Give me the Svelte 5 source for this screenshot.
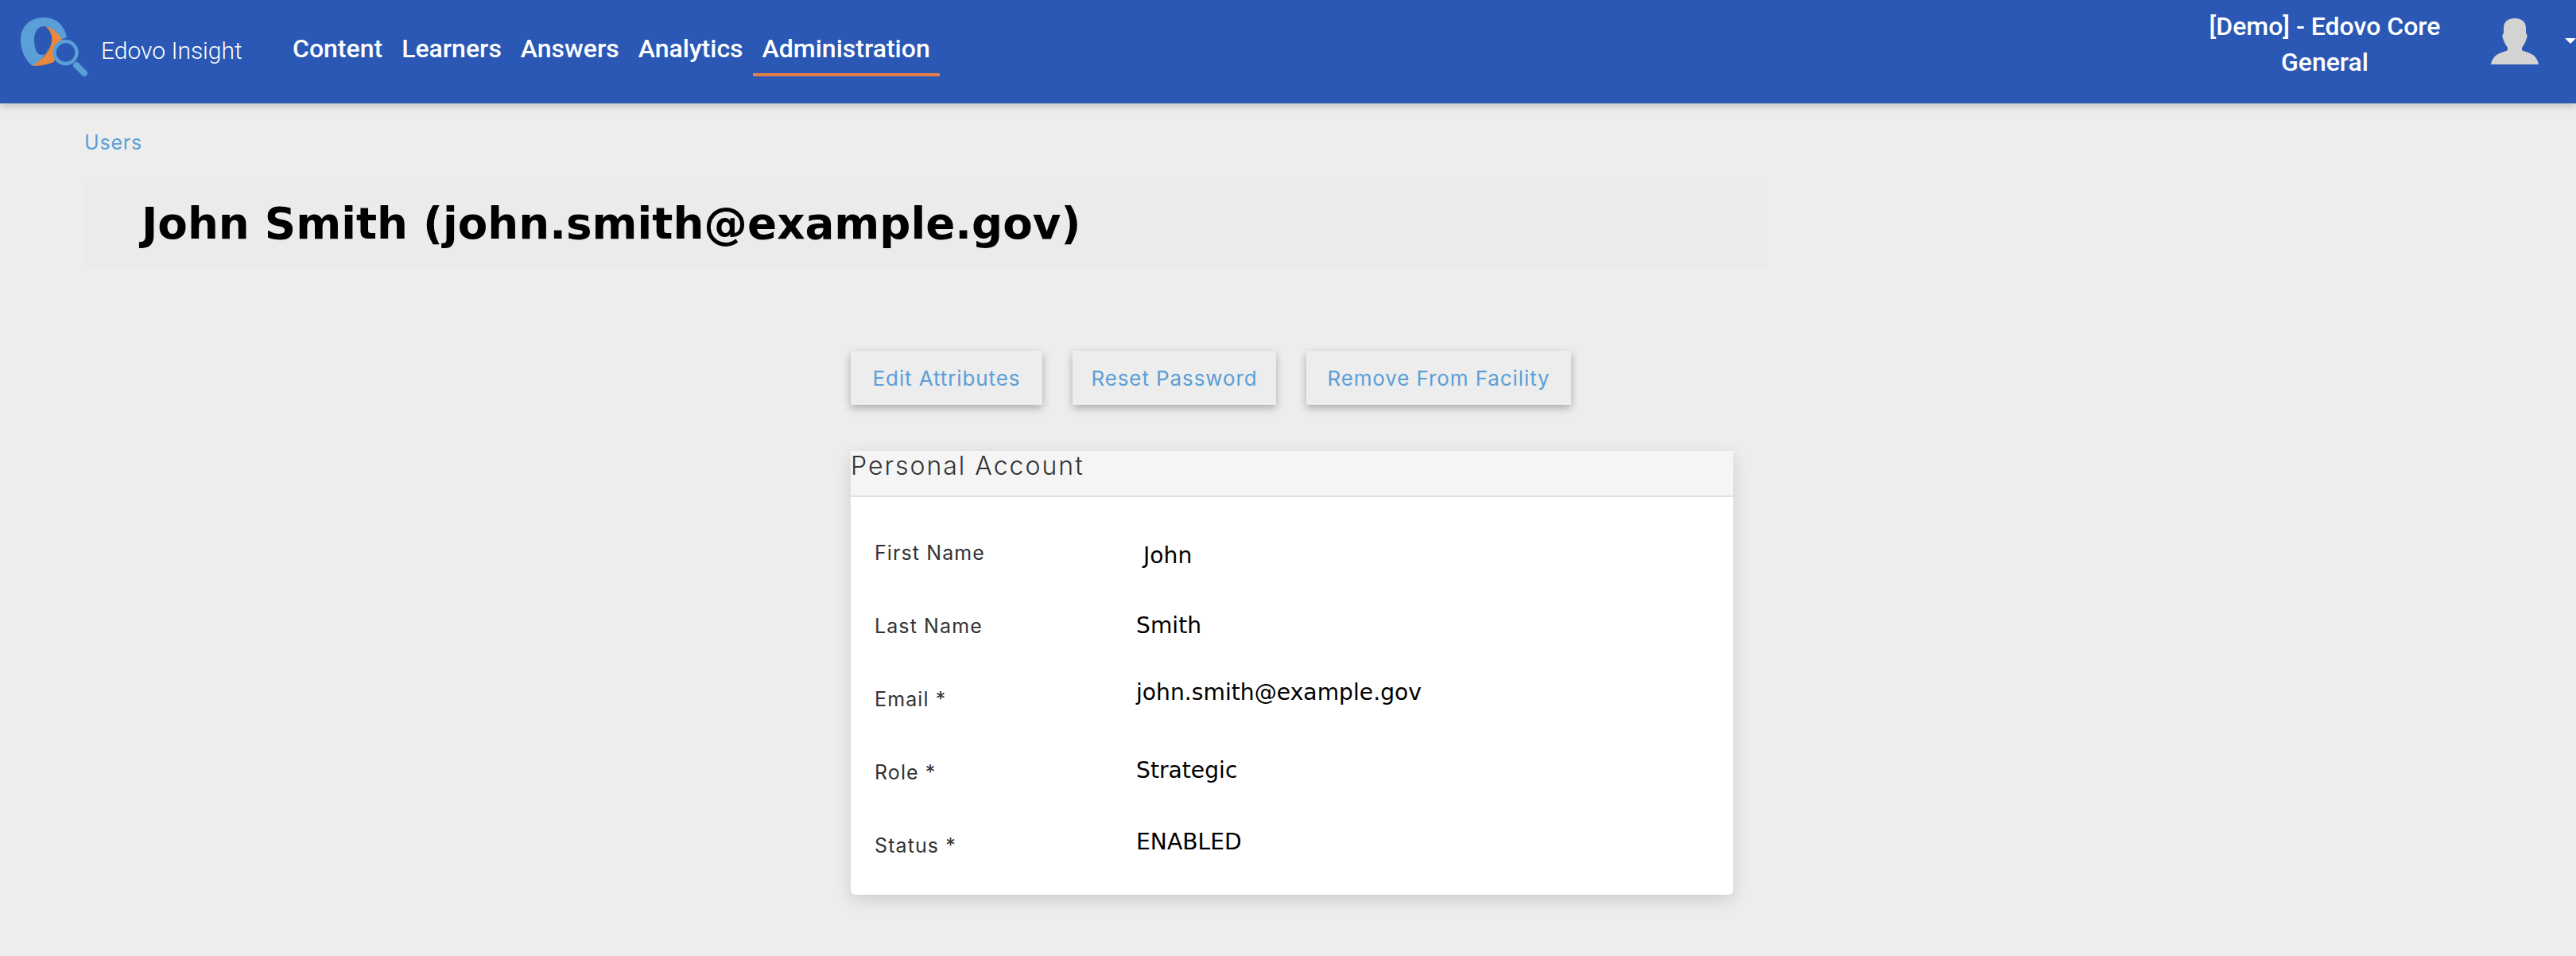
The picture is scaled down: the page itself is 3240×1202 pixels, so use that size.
<script>
  const navItems = ['Content', 'Learners', 'Answers', 'Analytics', 'Administration'];
  const actions = ['Edit Attributes', 'Reset Password', 'Remove From Facility'];
  const rows = [
    { label: 'First Name', value: 'John', cls: 'r-first' },
    { label: 'Last Name', value: 'Smith', cls: 'r-last' },
    { label: 'Email *', value: 'john.smith@example.gov', cls: 'r-email' },
    { label: 'Role *', value: 'Strategic', cls: 'r-role' },
    { label: 'Status *', value: 'ENABLED', cls: 'r-status' }
  ];
</script>

<header class="topbar">
  <svg class="logo" viewBox="0 0 120 130" width="120" height="130" aria-hidden="true">
    <path fill="#5a9fd8" d="M55 22C71 22 81 32 84 47L76 50C73 42 66 35 57 33C48 32 43 40 43 50C43 60 46 69 52 69C56 69 60 64 61 60L50 78L41 83C32 76 26 64 26 50C26 33 38 22 55 22Z"/>
    <path fill="#e8883f" d="M57 33C66 35 73 41 78 50L72 60L68 78C58 82 48 83 41 83C54 74 63 64 65 52C66 44 63 38 57 33Z"/>
    <circle cx="82.5" cy="66" r="14" fill="#2a58b4" stroke="#5a9fd8" stroke-width="4.5"/>
    <path d="M96 82l10 10" stroke="#5a9fd8" stroke-width="8" stroke-linecap="round"/>
  </svg>
  <span class="brand">Edovo Insight</span>
  <nav class="nav">
    {#each navItems as item}
      <span class="nav-item" class:active={item === 'Administration'}>{item}</span>
    {/each}
  </nav>
  <div class="facility">
    <div>[Demo] - Edovo Core</div>
    <div>General</div>
  </div>
  <svg class="avatar" viewBox="0 0 60 58" width="60" height="58" aria-hidden="true">
    <path fill="#d3d3d3" d="M30 0c8 0 14 4 14 12v7c2 1 2 4 1 6-1 3-2 6-4 9l-2 3v3c3 2 6 2 10 4 6 2 10 8 11 14H0c1-6 5-12 11-14 4-2 7-2 10-4v-3l-2-3c-2-3-3-6-4-9-1-2-1-5 1-6v-7C16 4 22 0 30 0z"/>
  </svg>
  <span class="caret"></span>
</header>

<main class="page">
  <div class="crumb">Users</div>
  <div class="title-box">
    <h1>John Smith (john.smith@example.gov)</h1>
  </div>
  <section class="content">
    <div class="actions">
      {#each actions as action}
        <button type="button" class="action">{action}</button>
      {/each}
    </div>
    <div class="card">
      <div class="card-head">Personal Account</div>
      <div class="card-body">
        {#each rows as row}
          <div class="row {row.cls}">
            <span class="label">{row.label}</span>
            <span class="value">{row.value}</span>
          </div>
        {/each}
      </div>
    </div>
  </section>
</main>

<style>
  :global(body) {
    margin: 0;
    background: #ededed;
  }
  .topbar {
    height: 130px;
    background: #2a58b4;
    display: flex;
    align-items: flex-start;
    box-shadow: 0 3px 10px rgba(0, 0, 0, 0.2);
    overflow: hidden;
    font-family: Roboto, sans-serif;
    color: #fff;
  }
  .logo {
    flex: none;
  }
  .brand {
    margin: 44px 0 0 7px;
    font-size: 30px;
    line-height: 40px;
    font-weight: 300;
    width: 229px;
    flex: none;
  }
  .nav {
    display: flex;
  }
  .nav-item {
    padding: 41px 12px 11px;
    font-size: 32px;
    line-height: 40px;
    font-weight: 500;
    border-bottom: 4px solid transparent;
  }
  .nav-item.active {
    border-bottom-color: #e48049;
  }
  .facility {
    margin-left: auto;
    width: 300px;
    padding-top: 11px;
    text-align: center;
    font-size: 32px;
    line-height: 45px;
    font-weight: 500;
  }
  .avatar {
    flex: none;
    margin: 23px 0 0 59px;
  }
  .caret {
    flex: none;
    margin: 48px 0 0 33px;
    border-left: 7px solid transparent;
    border-right: 7px solid transparent;
    border-top: 7px solid #fff;
  }
  .page {
    padding: 0 104px 76px;
    font-family: Inter, sans-serif;
  }
  .crumb {
    padding: 33px 0 0 2px;
    height: 60px;
    font-size: 25px;
    line-height: 32px;
    font-weight: 400;
    letter-spacing: 0.8px;
    color: #5a9fd8;
  }
  .title-box {
    width: 2120px;
    height: 115px;
    background: #ebebeb;
    display: flex;
    align-items: center;
    padding-left: 74px;
    box-sizing: border-box;
  }
  h1 {
    margin: 0;
    font-family: "DejaVu Sans", sans-serif;
    font-size: 54.7px;
    font-weight: 700;
    color: #000;
  }
  .content {
    margin-left: 966px;
    width: 1110px;
    padding-top: 103px;
  }
  .actions {
    display: flex;
    gap: 38px;
  }
  .action {
    height: 68px;
    padding: 0;
    border: 0;
    background: #ededed;
    box-shadow: 0 4px 10px rgba(0, 0, 0, 0.28);
    font-family: Inter, sans-serif;
    font-size: 26px;
    font-weight: 400;
    letter-spacing: 0.9px;
    color: #5a9fd8;
  }
  .action:nth-child(1) {
    width: 241px;
  }
  .action:nth-child(2) {
    width: 256px;
  }
  .action:nth-child(3) {
    width: 333px;
  }
  .card {
    margin-top: 58px;
    background: #fff;
    border-radius: 3px 3px 6px 6px;
    box-shadow: 0 6px 20px rgba(0, 0, 0, 0.14);
  }
  .card-head {
    height: 56px;
    background: #f5f5f5;
    border-bottom: 2px solid #e0e0e0;
    font-size: 32px;
    line-height: 38px;
    font-weight: 300;
    letter-spacing: 2px;
    color: #333;
  }
  .card-body {
    padding: 48px 30px 40px;
  }
  .row {
    display: grid;
    grid-template-columns: 329px 1fr;
    height: 92px;
    line-height: 44px;
  }
  .row:last-child {
    height: 44px;
  }
  .label {
    font-size: 25px;
    letter-spacing: 1.1px;
    color: #333;
  }
  .value {
    font-family: "DejaVu Sans", sans-serif;
    font-size: 28.2px;
    color: #000;
  }
  .r-first .value {
    padding-left: 9px;
    margin-top: 4px;
  }
  .r-email .value {
    margin-top: -8px;
  }
  .r-role .value {
    margin-top: -2px;
  }
  .r-status .value {
    margin-top: -4px;
  }
</style>
